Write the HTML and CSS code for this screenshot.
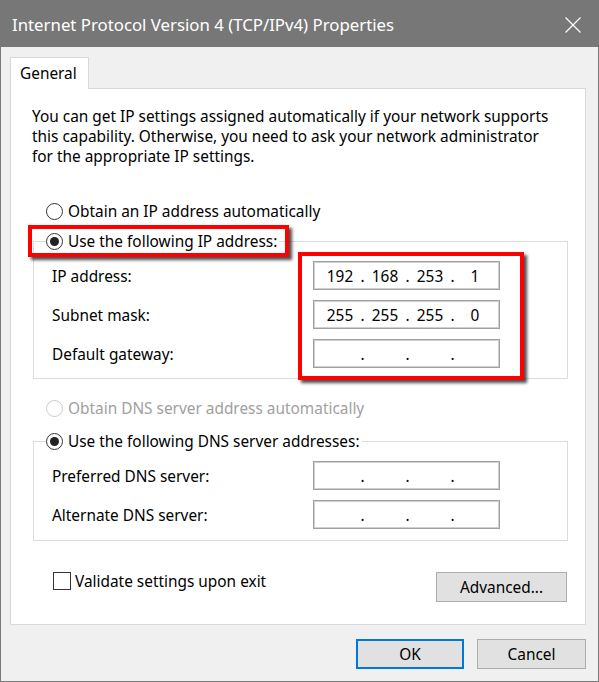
FILE: index.html
```html
<!DOCTYPE html>
<html>
<head>
<meta charset="utf-8">
<link rel="stylesheet" href="styles.css">
</head>
<body>
<div class="window">
  <div class="titlebar">
    <span class="title">Internet Protocol Version 4 (TCP/IPv4) Properties</span>
    <svg class="close" width="16" height="16" viewBox="0 0 16 16"><path d="M0.5 0.5 L15.5 15.5 M15.5 0.5 L0.5 15.5" stroke="#fff" stroke-width="1.2" fill="none"/></svg>
  </div>
  <div class="body">
    <div class="tabs"><div class="tab">General</div></div>
    <div class="panel">
      <p class="intro">You can get IP settings assigned automatically if your network supports this capability. Otherwise, you need to ask your network administrator for the appropriate IP settings.</p>

      <div class="radio-row first"><span class="radio"></span><span>Obtain an IP address automatically</span></div>

      <div class="group g1">
        <div class="legend"><span class="radio checked"></span><span>Use the following IP address:</span></div>
        <div class="field"><span class="label">IP address:</span>
          <div class="ip"><span class="oct">192</span><span class="dot">.</span><span class="oct">168</span><span class="dot">.</span><span class="oct">253</span><span class="dot">.</span><span class="oct">1</span></div></div>
        <div class="field"><span class="label">Subnet mask:</span>
          <div class="ip"><span class="oct">255</span><span class="dot">.</span><span class="oct">255</span><span class="dot">.</span><span class="oct">255</span><span class="dot">.</span><span class="oct">0</span></div></div>
        <div class="field"><span class="label">Default gateway:</span>
          <div class="ip"><span class="oct"></span><span class="dot">.</span><span class="oct"></span><span class="dot">.</span><span class="oct"></span><span class="dot">.</span><span class="oct"></span></div></div>
      </div>

      <div class="radio-row dns disabled"><span class="radio"></span><span>Obtain DNS server address automatically</span></div>

      <div class="group g2">
        <div class="legend"><span class="radio checked"></span><span>Use the following DNS server addresses:</span></div>
        <div class="field"><span class="label">Preferred DNS server:</span>
          <div class="ip"><span class="oct"></span><span class="dot">.</span><span class="oct"></span><span class="dot">.</span><span class="oct"></span><span class="dot">.</span><span class="oct"></span></div></div>
        <div class="field"><span class="label">Alternate DNS server:</span>
          <div class="ip"><span class="oct"></span><span class="dot">.</span><span class="oct"></span><span class="dot">.</span><span class="oct"></span><span class="dot">.</span><span class="oct"></span></div></div>
      </div>

      <div class="bottom-row">
        <div class="check-row"><span class="checkbox"></span><span>Validate settings upon exit</span></div>
        <div class="btn advanced">Advanced...</div>
      </div>
    </div>
    <div class="footer">
      <div class="btn ok">OK</div>
      <div class="btn cancel">Cancel</div>
    </div>
  </div>
  <div class="mark mark1"></div>
  <div class="mark mark2"></div>
</div>
</body>
</html>
```
FILE: styles.css
```css
* { box-sizing: border-box; }
html, body { margin: 0; padding: 0; }
body {
  font-family: "Noto Sans", "Open Sans", sans-serif;
  font-size: 15.4px;
  color: #000;
  background: #f0f0f0;
}
.window {
  position: relative;
  width: 599px;
  height: 682px;
  border: 1px solid #7a7a7a;
  border-top: none;
  background: #f0f0f0;
}
.titlebar {
  height: 47px;
  background: #777777;
  margin: 0 -1px;
  display: flex;
  align-items: center;
  justify-content: space-between;
  padding: 2px 18px 0 12px;
}
.title {
  color: #fff;
  font-size: 16.8px;
}
.close { display: block; margin-top: 0; }
.body {
  padding: 10px 12px 0 9px;
}
.tabs {
  height: 31px;
  display: flex;
  align-items: flex-end;
}
.tab {
  width: 79px;
  height: 32px;
  margin-bottom: -1px;
  background: #fff;
  border: 1px solid #d9d9d9;
  border-bottom: none;
  position: relative;
  z-index: 1;
  padding: 5px 0 0 9px;
}
.panel {
  width: 576px;
  background: #fff;
  border: 1px solid #d9d9d9;
  padding: 18px 17px 22px 22px;
}
.intro {
  margin: 0 0 0 -1px;
  line-height: 20px;
  width: 530px;
}
.radio-row, .legend, .check-row {
  display: flex;
  align-items: center;
  height: 20px;
  gap: 5px;
  white-space: nowrap;
}
.radio-row { margin-left: 13px; }
.radio-row.first { margin-top: 34px; }
.radio-row.dns { margin-top: 19px; }
.disabled { color: #a0a0a0; }
.radio {
  width: 17px;
  height: 17px;
  border-radius: 50%;
  border: 1px solid #333;
  background: #fff;
  flex: none;
  display: flex;
  align-items: center;
  justify-content: center;
}
.disabled .radio { border-color: #cccccc; }
.radio.checked::after {
  content: "";
  width: 9px;
  height: 9px;
  border-radius: 50%;
  background: #222;
}
.group {
  border: 1px solid #dcdcdc;
  width: 535px;
  padding: 0 0 10px 18px;
}
.g1 { margin-top: 20px; }
.g2 { margin-top: 23px; padding-bottom: 11px; }
.legend {
  margin: -11px 0 0 -6px;
  background: #fff;
  width: fit-content;
  padding: 0 2px 0 0;
}
.field {
  display: flex;
  align-items: center;
  height: 29px;
  margin-top: 10px;
}
.label { width: 261px; padding-top: 2px; }
.ip {
  width: 187px;
  height: 29px;
  border: 1px solid #a0a0a0;
  box-shadow: inset 0 0 0 1px #d0d0d0;
  display: flex;
  align-items: center;
  padding: 2px 0 0 8px;
}
.oct { width: 36px; text-align: center; }
.dot { width: 9px; text-align: center; }
.bottom-row {
  display: flex;
  justify-content: space-between;
  align-items: flex-start;
  margin-top: 31px;
  padding-left: 20px;
}
.check-row { margin-top: -3px; gap: 4px; height: 24px; }
.checkbox {
  width: 18px;
  height: 18px;
  border: 1px solid #333;
  background: #fff;
  flex: none;
}
.btn {
  display: flex;
  align-items: center;
  justify-content: center;
  height: 30px;
  background: #e1e1e1;
  border: 1px solid #adadad;
}
.advanced { width: 131px; margin-right: 1px; }
.footer {
  display: flex;
  justify-content: flex-end;
  gap: 13px;
  margin-top: 14px;
  padding-right: 0;
}
.ok { width: 108px; border: 2px solid #0078d7; }
.cancel { width: 109px; }
.mark {
  position: absolute;
  border: 4px solid #ff0000;
  box-shadow: 3px 3px 3px rgba(0,0,0,0.7);
}
.mark1 { left: 27px; top: 225px; width: 261px; height: 32px; }
.mark2 { left: 297px; top: 252px; width: 226px; height: 128px; }
```
